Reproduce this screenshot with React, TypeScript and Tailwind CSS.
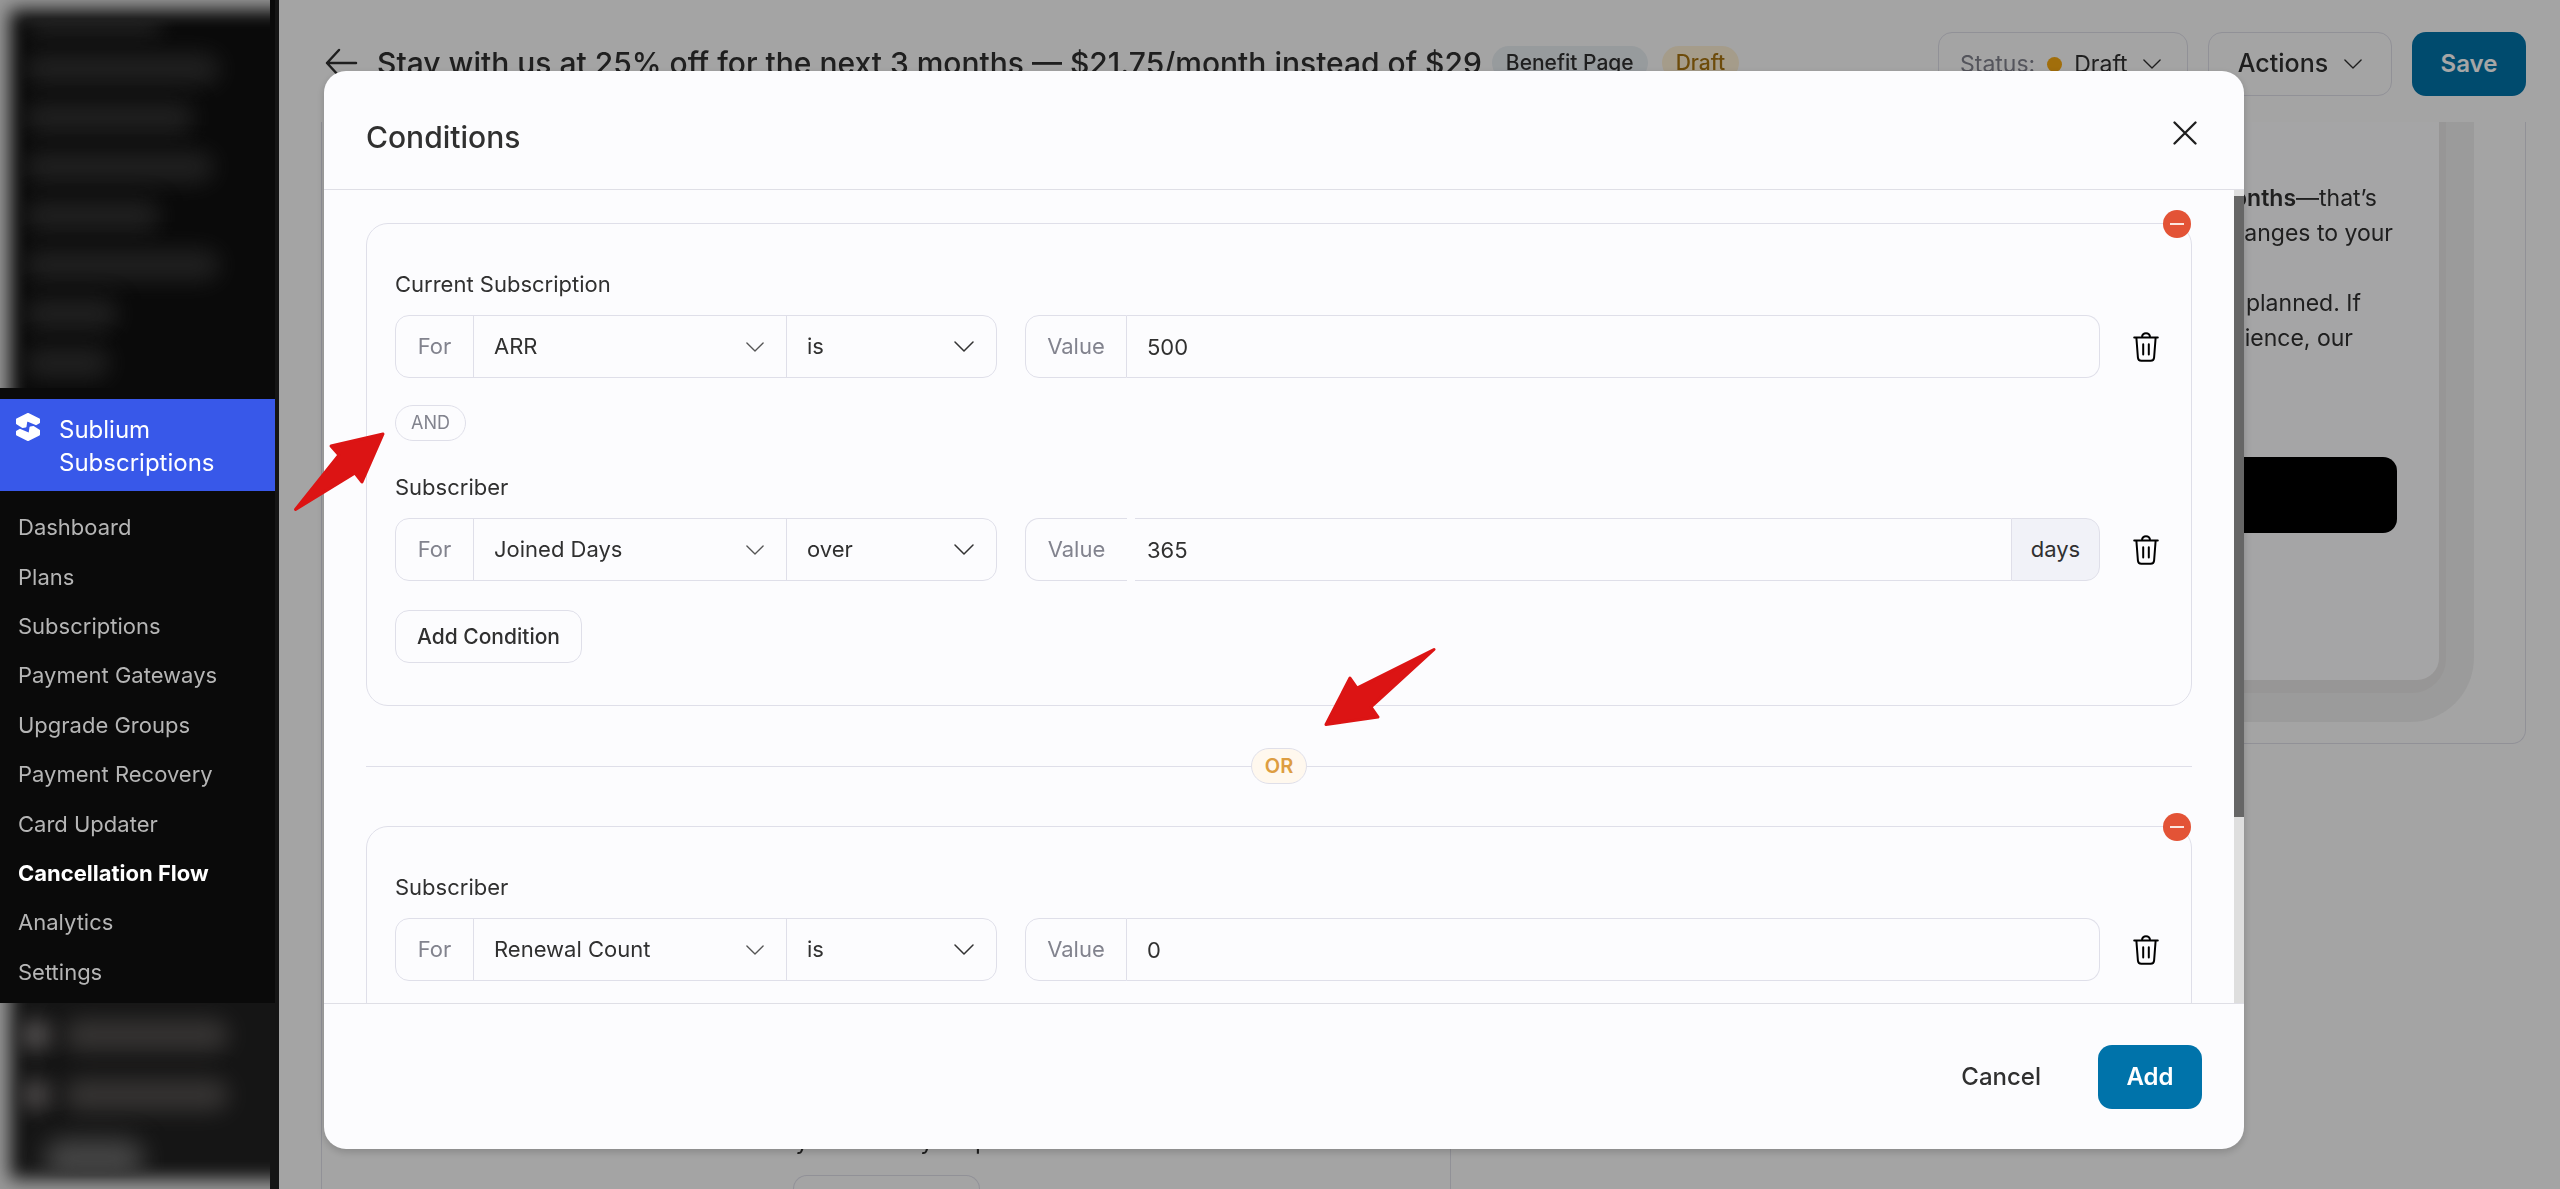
import { ReactNode } from "react";

const menuItems = [
  "Dashboard",
  "Plans",
  "Subscriptions",
  "Payment Gateways",
  "Upgrade Groups",
  "Payment Recovery",
  "Card Updater",
  "Cancellation Flow",
  "Analytics",
  "Settings",
];

const blurredRows = ["w-[140px]", "w-[196px]", "w-[170px]", "w-[190px]", "w-[136px]", "w-[196px]", "w-[94px]", "w-[86px]"];

function Chevron({ className = "" }: { className?: string }) {
  return (
    <svg viewBox="0 0 20 11" fill="none" stroke="currentColor" strokeLinecap="round" strokeLinejoin="round" className={className} aria-hidden="true">
      <path d="M1 1 10 10 19 1" strokeWidth="1.5" />
    </svg>
  );
}

function TrashIcon() {
  return (
    <svg viewBox="0 0 26 30" fill="none" stroke="black" strokeWidth="2" strokeLinecap="round" strokeLinejoin="round" className="h-[30px] w-[26px]" aria-hidden="true">
      <path d="M1.200 5.500h23.600M9 5.200C9 2.800 10.800 1.200 13 1.200s4 1.600 4 4M3.400 6l1.500 19.500a3.500 3.500 0 0 0 3.500 3.300h9.200a3.500 3.500 0 0 0 3.500-3.300L22.600 6M10.200 12.200v10.200M15.800 12.200v10.200" />
    </svg>
  );
}

function SubliumLogo() {
  return (
    <svg viewBox="0 0 26 28" fill="white" stroke="white" strokeWidth="2" strokeLinejoin="round" className="h-7 w-[26px] shrink-0" aria-hidden="true">
      <path d="M13 1 24 6.500V9.500l-3 1.700-9.500-4.200-1 6.500-3 .5L2 10.500v-4Z" />
      <path d="M13 27 2 21.500V18.500l3-1.700 9.500 4.200 1-6.500 3-.5L24 17.500v4Z" />
    </svg>
  );
}

function Sidebar() {
  return (
    <aside className="flex w-[279px] shrink-0 flex-col overflow-hidden bg-[#151515]">
      <div className="w-[275px] bg-[#0a0a0a]">
        <div className="mb-[11px] h-[388px] w-[270px] overflow-hidden shadow-[inset_16px_16px_18px_-6px_#999999]">
          <div className="flex flex-col gap-[17px] pl-6 pt-1 mix-blend-lighten">
            {blurredRows.map((width, i) => (
              <div key={i} className={`h-8 rounded-full bg-[#202020] blur-[11px] ${width}`} />
            ))}
          </div>
        </div>
        <a href="#sublium" className="flex gap-[18px] bg-[#3858e9] pb-3 pl-[15px] pt-[14px] text-[24px] leading-[33px] text-white">
          <SubliumLogo />
          <span>
            Sublium
            <br />
            Subscriptions
          </span>
        </a>
        <nav className="flex h-[512px] flex-col pb-[6px] pt-3">
          {menuItems.map((item) => (
            <a
              key={item}
              href="#menu"
              className={`flex flex-1 items-center pl-[18px] text-[22px] ${item === "Cancellation Flow" ? "font-bold text-white" : "text-[#b5b5b5]"}`}
            >
              {item}
            </a>
          ))}
        </nav>
      </div>
      <div className="w-[270px] flex-1 overflow-hidden shadow-[inset_16px_-16px_18px_-6px_#999999]">
        <div className="flex flex-col gap-7 pl-5 pt-4 mix-blend-lighten">
          <div className="flex gap-3">
            <div className="size-8 rounded-full bg-[#504d4d] blur-[10px]" />
            <div className="h-8 w-[165px] rounded-full bg-[#363433] blur-[11px]" />
          </div>
          <div className="flex gap-3">
            <div className="size-8 rounded-full bg-[#484545] blur-[10px]" />
            <div className="h-8 w-[165px] rounded-full bg-[#363433] blur-[11px]" />
          </div>
          <div className="ml-6 h-10 w-[100px] rounded-full bg-[#454545] blur-[12px]" />
        </div>
      </div>
    </aside>
  );
}

function PageHeader() {
  return (
    <header className="flex items-center justify-between pl-[46px] pr-[34px] pt-8">
      <div className="flex items-center pb-0.5">
        <button aria-label="Back" className="mr-[19px]">
          <svg viewBox="0 0 33 30" fill="none" stroke="currentColor" strokeWidth="2.500" strokeLinecap="round" strokeLinejoin="round" className="h-[30px] w-[33px]">
            <path d="M31 15H2M14 2 2 15l12 13" />
          </svg>
        </button>
        <h1 className="whitespace-nowrap text-[30px] font-medium leading-9">
          Stay with us at 25% off for the next 3 months — $21.75/month instead of $29
        </h1>
        <span className="ml-[10px] whitespace-nowrap rounded-full bg-[#e8eef2] px-[14px] text-[21px] font-medium leading-[34px]">Benefit Page</span>
        <span className="ml-[14px] rounded-full bg-[#fdf0d5] px-[14px] text-[21px] font-medium leading-[34px] text-[#a87410]">Draft</span>
      </div>
      <div className="flex gap-5">
        <button className="flex h-16 w-[250px] items-center rounded-[14px] border border-[#dfdfe9] pl-[21px] text-[23px]">
          <span className="text-[#82838e]">Status:</span>
          <span className="mx-3 size-[15px] rounded-full bg-[#f8a912]" />
          Draft
          <Chevron className="ml-[15px] h-[10px] w-[18px]" />
        </button>
        <button className="flex h-16 w-[184px] items-center justify-center gap-4 rounded-[14px] border border-[#dfdfe9] text-[25px] font-medium">
          Actions
          <Chevron className="h-[10px] w-[18px]" />
        </button>
        <button className="h-16 w-[114px] rounded-[14px] bg-[#0073aa] text-[24px] font-semibold text-white">Save</button>
      </div>
    </header>
  );
}

function Page() {
  return (
    <div className="flex h-full flex-col">
      <PageHeader />
      <div className="mt-[26px] flex min-h-0 flex-1 items-start justify-between overflow-hidden pl-[42px] pr-[34px]">
        <section className="flex h-full w-[1130px] flex-col items-center justify-end border-x border-[#dfdfe9] text-[24px]">
          <p>Use conditions to show only when they stop and meet the rules below</p>
          <button className="mt-4 h-[14px] w-[187px] rounded-t-[14px] border border-b-0 border-[#dfdfe9]" aria-label="Add conditions" />
        </section>
        <section className="h-[622px] w-[800px] rounded-b-[14px] border border-t-0 border-[#dfdfe9] pl-10 pr-[51px]">
          <div className="h-[600px] rounded-b-[64px] bg-[#efefef] pr-7">
            <div className="h-[571px] rounded-b-[34px] bg-[#e9e7e6] pr-[7px]">
              <div className="flex h-[558px] flex-col items-end whitespace-nowrap rounded-b-[22px] bg-[#fdfdff] pr-[42px] pt-[59px] text-[23px] leading-[35px]">
                <p className="pr-5">
                  <b className="font-semibold">months</b>—that’s
                </p>
                <p className="pr-1">changes to your</p>
                <p className="pr-9 pt-[35px]">planned. If</p>
                <p className="pr-11">experience, our</p>
                <button aria-label="Continue" className="mt-[101px] h-[76px] w-[500px] rounded-[14px] bg-black" />
              </div>
            </div>
          </div>
        </section>
      </div>
    </div>
  );
}

type RuleSelectProps = { id: string; value: string; label: string; className: string; chevron: string };

function RuleSelect({ id, value, label, className, chevron }: RuleSelectProps) {
  return (
    <div className={`relative flex items-center ${className}`}>
      <select id={id} aria-label={label} defaultValue={value} className="size-full appearance-none bg-transparent pl-5 outline-none">
        <option>{value}</option>
      </select>
      <Chevron className={`pointer-events-none absolute right-[22px] ${chevron}`} />
    </div>
  );
}

type ConditionProps = { id: string; title: string; field: string; operator: string; value: string; unit?: string };

function Condition({ id, title, field, operator, value, unit }: ConditionProps) {
  return (
    <div>
      <p className="leading-8">{title}</p>
      <div className="mt-[15px] flex h-[63px] items-center">
        <div className="flex h-full w-[602px] rounded-[14px] border border-[#dfdfe9]">
          <label htmlFor={`${id}-field`} className="flex w-[78px] items-center justify-center border-r border-[#dfdfe9] text-[#82838e]">
            For
          </label>
          <RuleSelect
            id={`${id}-field`}
            label={`${title} field`}
            value={field}
            className="w-[313px] border-r border-[#dfdfe9]"
            chevron="h-[10px] w-[18px] text-[#555555]"
          />
          <RuleSelect id={`${id}-operator`} label={`${title} operator`} value={operator} className="flex-1" chevron="h-[11px] w-5 text-[#333333]" />
        </div>
        <div className="ml-7 flex h-full flex-1">
          <label
            htmlFor={`${id}-value`}
            className={`flex w-[102px] items-center justify-center rounded-l-[14px] border border-[#dfdfe9] text-[#82838e] ${unit ? "mr-2 border-r-0" : ""}`}
          >
            Value
          </label>
          <input
            id={`${id}-value`}
            defaultValue={value}
            className={`h-full min-w-0 flex-1 border-y border-[#dfdfe9] outline-none ${unit ? "pl-3" : "rounded-r-[14px] border-r pl-5"}`}
          />
          {unit && <span className="flex w-[89px] items-center justify-center rounded-r-[14px] border border-[#dfdfe9] bg-[#f1f2f8]">{unit}</span>}
        </div>
        <button aria-label={`Delete ${title}`} className="ml-[33px] mr-8">
          <TrashIcon />
        </button>
      </div>
    </div>
  );
}

function ConditionGroup({ children }: { children: ReactNode }) {
  return (
    <section className="relative rounded-[22px] border border-[#dfdfe9] pb-[42px] pl-7 pt-11">
      {children}
      <button aria-label="Remove group" className="absolute -top-[14px] right-0 flex size-7 items-center justify-center rounded-full bg-[#e35336]">
        <span className="h-[2px] w-[14px] bg-[#fbe6df]" />
      </button>
    </section>
  );
}

function ConditionsModal() {
  return (
    <div role="dialog" aria-label="Conditions" className="flex min-w-0 flex-1 flex-col overflow-hidden rounded-[22px] bg-[#fcfcfe] shadow-[0_3px_8px_rgba(0,0,0,0.18)]">
      <div className="flex h-[119px] shrink-0 items-center justify-between border-b border-[#dfdfe6] pl-[42px] pr-[47px]">
        <h2 className="pt-[14px] text-[30px] font-medium">Conditions</h2>
        <button aria-label="Close" className="pt-[5px]">
          <svg viewBox="0 0 24 24" fill="none" stroke="#1e1e1e" strokeWidth="2.300" strokeLinecap="round" className="size-6">
            <path d="M1.500 1.500l21 21M22.500 1.500l-21 21" />
          </svg>
        </button>
      </div>
      <div className="flex min-h-0 flex-1 text-[22px]">
        <div className="min-w-0 flex-1 overflow-hidden px-[42px] pt-[33px]">
          <ConditionGroup>
            <Condition id="arr" title="Current Subscription" field="ARR" operator="is" value="500" />
            <div className="mb-[30px] mt-[27px] h-9 w-[71px] rounded-full border border-[#dfdfe9] text-center text-[18px] leading-[34px] text-[#82838e]">AND</div>
            <Condition id="joined" title="Subscriber" field="Joined Days" operator="over" value="365" unit="days" />
            <button className="mt-[29px] h-[53px] w-[187px] rounded-[14px] border border-[#dfdfe9] text-[21px] font-medium">Add Condition</button>
          </ConditionGroup>
          <div className="my-[42px] flex items-center">
            <hr className="flex-1 border-[#dfdfe9]" />
            <span className="h-9 w-14 rounded-full border border-[#dfdfe9] bg-[#fff8ee] text-center text-[20px] font-semibold leading-[34px] text-[#dd9d41]">OR</span>
            <hr className="flex-1 border-[#dfdfe9]" />
          </div>
          <ConditionGroup>
            <Condition id="renewal" title="Subscriber" field="Renewal Count" operator="is" value="0" />
          </ConditionGroup>
        </div>
        <div className="w-[10px] bg-[#dedede] pt-[6px]">
          <div className="h-[621px] bg-[#666666]" />
        </div>
      </div>
      <div className="flex h-[146px] shrink-0 items-center justify-end border-t border-[#dfdfe6] pr-[42px] text-[24px]">
        <button className="px-[57px] font-medium">Cancel</button>
        <button className="h-16 w-[104px] rounded-[14px] bg-[#0073aa] font-semibold text-white">Add</button>
      </div>
    </div>
  );
}

export default function App() {
  return (
    <div className="relative flex h-screen overflow-hidden font-[Inter,sans-serif] text-[#303030]">
      <Sidebar />
      <main className="relative min-w-0 flex-1 bg-[#fcfcfc]">
        <Page />
        <div className="absolute inset-0 flex bg-black/35 pb-10 pl-[45px] pr-[316px] pt-[71px]">
          <ConditionsModal />
        </div>
      </main>
      {/* pointers to the AND / OR connectors */}
      <svg viewBox="0 0 92 80" fill="#dc1414" stroke="#dc1414" strokeWidth="3" strokeLinejoin="round" className="absolute left-[293px] top-[432px] h-20 w-[92px]" aria-hidden="true">
        <path d="M2.500 77.500 46 23 38 14 90 2 69 50 62 41Z" />
      </svg>
      <svg viewBox="0 0 112 80" fill="#dc1414" stroke="#dc1414" strokeWidth="3" strokeLinejoin="round" className="absolute left-[1324px] top-[647px] h-20 w-28" aria-hidden="true">
        <path d="M2 77.500 26 31 33 41 110 2.500 47 60 54 70Z" />
      </svg>
    </div>
  );
}
